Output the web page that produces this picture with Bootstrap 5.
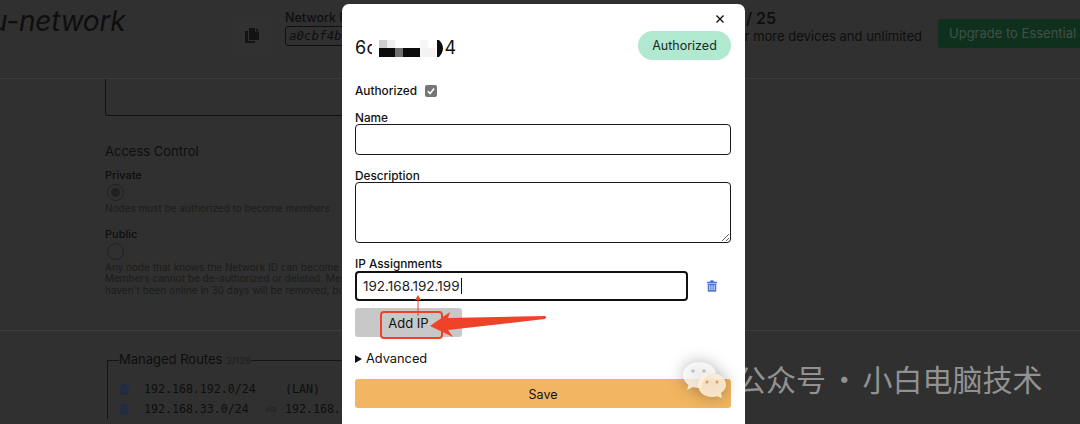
<!DOCTYPE html>
<html lang="en">

<head>
  <meta charset="UTF-8">
  <meta name="viewport" content="width=device-width, initial-scale=1.0">
  <title>Network member</title>
  <link href="https://cdn.jsdelivr.net/npm/bootstrap@5.3.0/dist/css/bootstrap.min.css" rel="stylesheet">
  <style>
    html, body { height: 424px; overflow: hidden; }
    body { position: relative; width: 1080px; background: #303030; color: #0e0e0e; font-family: Inter, "Liberation Sans", sans-serif; font-size: 12px; }
    .mono { font-family: "DejaVu Sans Mono", "Liberation Mono", monospace; }

    /* dimmed page behind the dialog */
    .top-bar { height: 79px; border-bottom: 1px solid #3a3a3a; }
    .site-name { width: 241px; margin-left: -9px; margin-top: 4px; font-size: 28px; font-style: italic; line-height: 34px; white-space: nowrap; letter-spacing: -.2px; }
    .copy-box { width: 40px; height: 40px; margin-right: 13px; margin-top: 15px; background: #313131; }
    .net-label { margin-top: 10px; font-size: 12.5px; font-weight: 500; line-height: 15px; }
    .net-id { width: 220px; height: 20px; margin-top: 1px; padding: 0 3px; border: 1px solid #101010; border-radius: 3px; font-size: 12.5px; font-style: italic; line-height: 18px; }
    .plan-info { width: 186px; margin-left: 231px; margin-top: 8px; white-space: nowrap; text-align: right; }
    .plan-count { padding-left: 10px; font-size: 16px; font-weight: 600; line-height: 20px; text-align: left; }
    .plan-text { margin-top: 0; font-size: 13px; line-height: 16px; }
    .upgrade-btn { flex: none; width: 150px; height: 29px; margin-left: 16px; margin-top: 19px; padding: 0 0 0 11px; border: 0; border-radius: 3px; background: #10301e; color: #3f5147; font-size: 13px; line-height: 29px; text-align: left; white-space: nowrap; }

    .main-area { padding-left: 105px; }
    .desc-box { width: 620px; height: 37px; border: 1px solid #101010; border-top: 0; border-radius: 0 0 3px 3px; }
    .sect-title { margin-top: 27px; font-size: 13px; line-height: 16px; }
    .access-name { margin-top: 9px; font-size: 11px; font-weight: 500; line-height: 14px; }
    .public-name { margin-top: 12px; }
    .radio-ring { width: 17px; height: 17px; margin: 2px 0 2px 2px; border: 1.500px solid #202020; border-radius: 50%; }
    .radio-dot { width: 9px; height: 9px; margin: 2.500px; border-radius: 50%; background: #202020; }
    .access-note { color: #1c1c1c; font-size: 10px; line-height: 11.500px; white-space: nowrap; }
    .page-rule { height: 1px; margin-top: 34px; background: #3c3c3c; }
    .routes-box { width: 620px; margin: 20px 0 0 107px; padding: 0 0 0 11px; border: 1px solid #141414; border-width: 1px 0 0 1px; }
    .routes-box legend { float: none; width: auto; margin: -9px 0 0 0; padding: 0; font-size: 13px; line-height: 16px; }
    .routes-box legend small { color: #1c1c1c; font-size: 9.500px; }
    .route-row { height: 20px; margin-left: 1px; font-size: 11.600px; line-height: 20px; white-space: nowrap; }
    .route-first { margin-top: 10px; }
    .route-row svg { flex: none; margin-right: 15px; color: #1a2b50; }
    .route-ip { width: 121px; }
    .route-via { width: 20px; color: #222; font-family: Inter, sans-serif; font-size: 8.500px; }

    /* member dialog */
    .member-dialog { position: absolute; left: 342px; top: 4px; width: 403px; height: 440px; padding: 27px 14px 0 13px; border: 0; border-radius: 7px; background: #fff; color: #111; display: block; }
    .dialog-close { position: absolute; top: 6px; right: 18px; width: 16px; height: 16px; padding: 0; border: 0; background: transparent; transform: translate(1px, -1px); }
    .node-title { position: relative; height: 29px; padding-top: 4px; font-size: 18px; line-height: 26px; letter-spacing: .3px; word-spacing: .25px; white-space: nowrap; }
    .mosaic { position: absolute; left: 17px; top: 9px; }
    .auth-badge { width: 93px; height: 29px; border-radius: 15px; background: #b0e8d0; color: #1b2b25; font-size: 12.500px; font-weight: 400; line-height: 29px; text-align: center; }
    .auth-row { margin-top: 24px; height: 14px; }
    .field-label { display: block; margin: 0; font-size: 11.800px; font-weight: 500; line-height: 14px; }
    .gray-check { width: 12px; height: 12px; margin-left: 8px; border-radius: 2px; background: #767676; }
    .mt-name { margin-top: 13px; margin-bottom: -1px; padding-top: 1px; }
    .auth-row + .mt-name { margin-top: 12px; }
    .dialog-input { height: 31px; border: 1px solid #1a1a1a; border-radius: 4px; }
    .dialog-area { height: 61px; border: 1px solid #1a1a1a; border-radius: 4px; resize: both; }
    .mt-ip { margin-top: 14px; margin-bottom: 0; padding-top: 1px; line-height: 13px; }
    .ip-field { width: 333px; height: 30px; padding: 0 6px; border: 2px solid #111; border-radius: 4px; font-size: 13.500px; line-height: 26px; color: #222; }
    .ip-caret { border-right: 1px solid #111; padding-right: 1px; }
    .ip-trash { margin-left: 19px; color: #4a78d0; }
    .add-ip { width: 107px; height: 29px; margin-top: 7px; padding: 0; border: 0; border-radius: 3px; background: #c8c8c8; color: #111; font-size: 13px; line-height: 31px; }
    .add-ip:hover { background: #c8c8c8; color: #111; }
    .adv-row { margin-top: 14px; font-size: 12.800px; line-height: 16px; }
    .adv-arrow { display: inline-block; width: 0; height: 0; margin-right: 4px; border-left: 7px solid #111; border-top: 4.500px solid transparent; border-bottom: 4.500px solid transparent; }
    .save-btn { width: 100%; height: 29px; margin-top: 12px; padding: 0; border: 0; border-radius: 3px; background: #f2b662; color: #111; font-size: 12.500px; line-height: 31px; }
    .save-btn:hover { background: #f2b662; color: #111; }

    /* marks drawn on top of the screenshot */
    .note-marks { position: absolute; left: 0; top: 0; pointer-events: none; }
    .wm-logo { position: absolute; left: 682px; top: 360px; filter: drop-shadow(0 0 8px rgba(0, 0, 0, .38)); }
    .wm-text { position: absolute; left: 736px; top: 359px; color: rgba(255, 255, 255, .48); font-family: "Noto Sans CJK SC", sans-serif; font-size: 30px; line-height: 38px; white-space: nowrap; }
    .wm-dot { margin: 0 -3.500px; }
  </style>
</head>

<body>
  <svg width="0" height="0" class="d-block">
    <symbol id="trash" viewBox="0 0 14 16">
      <path fill="currentColor" d="M1 5h12v9.500A1.500 1.500 0 0 1 11.500 16h-9A1.500 1.500 0 0 1 1 14.500zM3.400 7v7h1.200V7zm3 0v7h1.200V7zm3 0v7h1.200V7zM0 2h4l.7-1.500A1 1 0 0 1 5.500 0h3a1 1 0 0 1 .8.500L10 2h4v2H0z"/>
    </symbol>
  </svg>

  <!-- Pagina de fondo -->
  <div class="top-bar d-flex">
    <div class="site-name flex-shrink-0">u-network</div>
    <div class="copy-box flex-shrink-0 d-flex align-items-center justify-content-center">
      <svg width="14" height="15" viewBox="0 0 14 15"><path fill="#141414" d="M4 0h6v3.500h4V12H4z"/><path fill="#141414" d="M11 0l3 2.700h-3zM0 3h3v10h7v2H0z"/></svg>
    </div>
    <div class="flex-shrink-0">
      <div class="net-label">Network ID</div>
      <div class="net-id mono">a0cbf4b62a7c1e3d</div>
    </div>
    <div class="plan-info flex-shrink-0">
      <div class="plan-count">/ 25</div>
      <div class="plan-text">or more devices and unlimited</div>
    </div>
    <button class="upgrade-btn" type="button">Upgrade to Essential</button>
  </div>

  <div class="main-area">
    <div class="desc-box"></div>
    <div class="sect-title">Access Control</div>
    <div class="access-name">Private</div>
    <div class="radio-ring"><div class="radio-dot"></div></div>
    <div class="access-note">Nodes must be authorized to become <em>members</em></div>
    <div class="access-name public-name">Public</div>
    <div class="radio-ring"></div>
    <div class="access-note">
      Any node that knows the Network ID can become a member.<br>
      Members cannot be de-authorized or deleted. Members that<br>
      haven't been online in 30 days will be removed, but can rejoin.
    </div>
  </div>
  <div class="page-rule"></div>
  <fieldset class="routes-box">
    <legend>Managed Routes <small>3/128</small></legend>
    <div class="route-row route-first d-flex align-items-center mono">
      <svg width="9" height="11"><use href="#trash"/></svg>
      <span class="route-ip">192.168.192.0/24</span><span class="route-via"></span><span>(LAN)</span>
    </div>
    <div class="route-row d-flex align-items-center mono">
      <svg width="9" height="11"><use href="#trash"/></svg>
      <span class="route-ip">192.168.33.0/24</span><span class="route-via">via</span><span>192.168.192.1</span>
    </div>
  </fieldset>

  <!-- Dialogo del miembro -->
  <div class="modal-content member-dialog">
    <button class="dialog-close" type="button" aria-label="Close">
      <svg width="16" height="16" viewBox="0 0 16 16"><path stroke="#111" stroke-width="1.400" d="M4.500 4.500l7 7m0-7l-7 7"/></svg>
    </button>
    <div class="d-flex justify-content-between">
      <div class="node-title">6c&nbsp;&nbsp;&nbsp;&nbsp;&nbsp;&nbsp;&nbsp;&nbsp;&nbsp;&nbsp;&nbsp;&nbsp;4
        <svg class="mosaic" width="73" height="18" viewBox="0 0 73 18">
          <rect width="73" height="18" fill="#fff"/>
          <rect x="7" y="0" width="8" height="8" fill="#cfcfcf"/>
          <rect x="15" y="0" width="8" height="8" fill="#efefef"/>
          <rect x="7" y="8" width="16" height="9" fill="#0c0c0c"/>
          <rect x="23" y="8" width="8" height="9" fill="#707070"/>
          <rect x="31" y="8" width="17" height="9" fill="#0c0c0c"/>
          <rect x="48" y="0" width="8" height="8" fill="#f6f6f6"/>
          <rect x="48" y="8" width="16" height="9" fill="#f3f3f3"/>
          <path d="M65 0h2q8 8 0 17h-2z" fill="#0c0c0c"/>
        </svg>
      </div>
      <div class="auth-badge">Authorized</div>
    </div>

    <div class="auth-row d-flex align-items-center">
      <label class="field-label">Authorized</label>
      <div class="gray-check d-flex">
        <svg width="12" height="12" viewBox="0 0 12 12"><path fill="none" stroke="#fff" stroke-width="1.600" d="M2.800 6.200l2.300 2.400 4-5"/></svg>
      </div>
    </div>

    <label class="field-label mt-name">Name</label>
    <input type="text" class="form-control dialog-input">

    <label class="field-label mt-name">Description</label>
    <textarea class="form-control dialog-area"></textarea>

    <label class="field-label mt-ip">IP Assignments</label>
    <div class="d-flex align-items-center">
      <div class="ip-field"><span class="ip-caret">192.168.192.199</span></div>
      <svg class="ip-trash" width="10" height="12"><use href="#trash"/></svg>
    </div>
    <button class="btn add-ip" type="button">Add IP</button>

    <div class="adv-row"><span class="adv-arrow"></span>Advanced</div>
    <button class="btn save-btn" type="button">Save</button>
  </div>

  <!-- Anotaciones y marca de agua -->
  <svg class="note-marks" width="1080" height="424">
    <rect x="381" y="312" width="61" height="26" rx="3" fill="none" stroke="#ee4328" stroke-width="2"/>
    <path d="M418 316V299" stroke="#ee4328" stroke-width="1"/>
    <path d="M418 295l-3 5h6z" fill="#ee4328"/>
    <path d="M430 326L450 312l-2 6 97-2q2 1 0 3l-97 11 5 7z" fill="#ee4328"/>
  </svg>
  <svg class="wm-logo" width="44" height="38" viewBox="0 0 44 38">
    <path fill="rgba(255,255,255,.75)" d="M17 2C8 2 1 8 1 15c0 4 2 7.500 5.500 10L5 30l6-3c2 .6 4 1 6 1 1 0 2 0 3-.2C19 20 26 13 34 13 33 7 26 2 17 2z"/>
    <path fill="rgba(255,240,220,.85)" d="M30 13c-8 0-14 5-14 12s6 12 14 12c2 0 3-.3 5-.7L40 38l-1-5c3-2 5-5 5-8 0-7-6-12-14-12z"/>
    <circle cx="11" cy="11" r="1.700" fill="#bdbdbd"/><circle cx="22" cy="11" r="1.700" fill="#bdbdbd"/>
    <circle cx="25" cy="22" r="1.500" fill="#d9a05a"/><circle cx="35" cy="22" r="1.500" fill="#d9a05a"/>
  </svg>
  <div class="wm-text">公众号 <span class="wm-dot">·</span> 小白电脑技术</div>

  <script src="https://cdn.jsdelivr.net/npm/bootstrap@5.3.0/dist/js/bootstrap.bundle.min.js"></script>
</body>

</html>
